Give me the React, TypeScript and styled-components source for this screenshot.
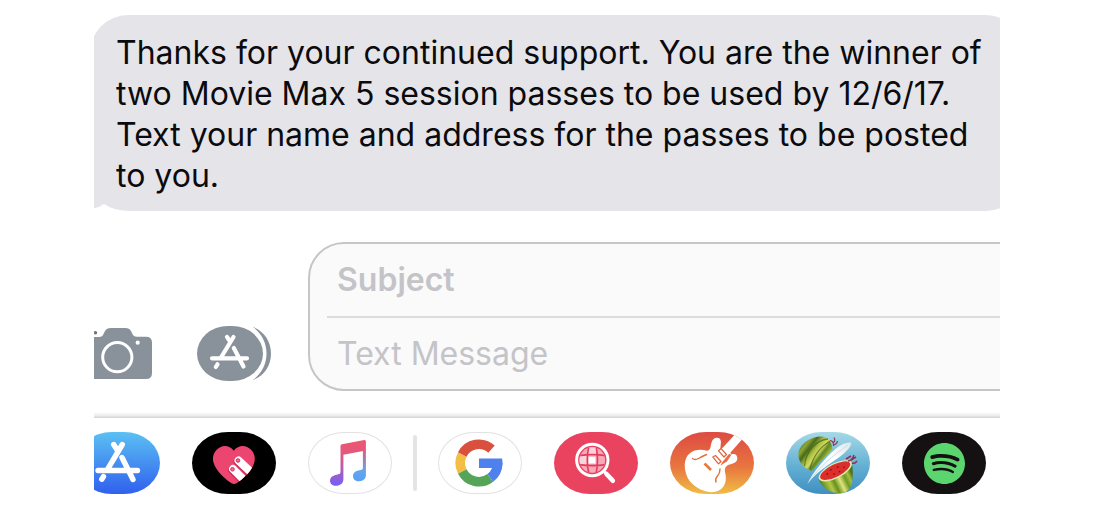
import React from "react";
import styled, { createGlobalStyle } from "styled-components";
import { SiSpotify } from "react-icons/si";

const GlobalStyle = createGlobalStyle`
  * { box-sizing: border-box; }
  body {
    margin: 0;
    background: #fff;
    font-family: Inter, "Liberation Sans", sans-serif;
  }
`;

const Screen = styled.main`
  margin: 0 94px;
  padding: 15px 0 20px;
  overflow: hidden;
`;

const Bubble = styled.article`
  position: relative;
  margin: 0 -22px 0 -4px;
  padding: 17px 0 15px 26px;
  background: #e5e4e9;
  border-radius: 38px 36px 36px 0;
`;

const BubbleText = styled.p`
  margin: 0;
  color: #0b0b0d;
  font-size: 32px;
  line-height: 41px;
  white-space: nowrap;
`;

const Tail = styled.svg`
  position: absolute;
  left: 0;
  bottom: 0;
`;

const Compose = styled.form`
  display: flex;
  align-items: flex-end;
  margin-top: 31px;
`;

const Tools = styled.div`
  display: flex;
  align-items: center;
  gap: 45px;
  padding: 0 37px 10px 0;
`;

const IconButton = styled.button`
  display: block;
  padding: 0;
  border: 0;
  background: none;
  cursor: pointer;

  svg { display: block; }
`;

const Fields = styled.div`
  flex: 1;
  min-width: 0;
  margin-right: -40px;
  padding-left: 17px;
  border: 2px solid #c6c6c9;
  border-radius: 36px;
  background: #fafafa;
  overflow: hidden;
`;

const Field = styled.input<{ $strong?: boolean }>`
  display: block;
  width: 100%;
  height: ${(p) => (p.$strong ? "72px" : "73px")};
  padding: ${(p) => (p.$strong ? "0 10px 2px" : "0 10px")};
  border: 0;
  border-top: ${(p) => (p.$strong ? "0" : "2px solid #dcdcde")};
  outline: 0;
  background: transparent;
  color: #0b0b0d;
  font-family: inherit;
  font-size: 32px;
  font-weight: ${(p) => (p.$strong ? 600 : 400)};

  &::placeholder { color: #c4c4c8; opacity: 1; }
`;

const Edge = styled.div`
  height: 6px;
  margin-top: 21px;
  background: linear-gradient(#ffffff, #ececec 60%, #d2d2d2);
`;

const Drawer = styled.nav`
  display: flex;
  align-items: center;
  gap: 32px;
  margin-left: -18px;
  padding-top: 14px;
`;

const AppButton = styled.button<{ $bg: string; $outlined?: boolean }>`
  display: flex;
  flex: none;
  align-items: center;
  justify-content: center;
  width: 84px;
  height: 62px;
  padding: 0;
  border: 0;
  border-radius: 36px / 31px;
  background: ${(p) => p.$bg};
  box-shadow: ${(p) => (p.$outlined ? "inset 0 0 0 1px #e2e2e4" : "none")};
  overflow: hidden;
  cursor: pointer;
`;

const Separator = styled.span`
  flex: none;
  width: 4px;
  height: 56px;
  margin: 0 -11px;
  border-radius: 2px;
  background: #e3e3e8;
`;

const Art = ({ children }: { children: React.ReactNode }) => (
  <svg width="84" height="62" viewBox="0 0 84 62" aria-hidden="true">
    {children}
  </svg>
);

const CameraIcon = () => (
  <svg width="58" height="51" viewBox="0 0 58 51" aria-hidden="true">
    <path
      fill="#89929b"
      d="M0 9H5Q8.5 9 9.500 6L11 3Q12.500 0 17 0H31.500Q35.500 0 37 3L39 7Q40 8.700 42.500 8.700H52Q58 8.700 58 14.500V45Q58 51 52 51H0Z"
    />
    <circle cx="23.300" cy="29.200" r="14.600" fill="none" stroke="#fff" strokeWidth="3" />
    <circle cx="43.700" cy="14.700" r="2.100" fill="#fff" />
    <circle cx="1.500" cy="4.700" r="1.700" fill="#6d757d" />
  </svg>
);

const AppsIcon = () => (
  <svg width="74" height="55" viewBox="0 0 74 55" aria-hidden="true">
    <rect width="66" height="55" rx="31" ry="27.500" fill="#89929b" />
    <path fill="#89929b" d="M56 1C67 5 74 15 74 27.500S67 50 56 54C65 47 69.500 38 69.500 27.500S65 8 56 1Z" />
    <g stroke="#fff" strokeWidth="4.200" strokeLinecap="round" fill="none">
      <path d="M36.500 11L24 31.500M30 11L32.500 14.500M36.800 22L46.500 40.500M15 32.300H50M20.500 38.300L18.800 41" />
    </g>
  </svg>
);

const StoreArt = () => (
  <Art>
    <g stroke="#fff" strokeWidth="5.400" strokeLinecap="round" fill="none">
      <path d="M46.300 12.500L31.500 37.300M37.700 12.500L41.500 18.500M46 25.500L57 47.500M22 38.500H61.500M27.500 44.500L25.800 47.200" />
    </g>
  </Art>
);

const heart =
  "M41.800 18.800C45.500 14 51 13 55.500 15.300C61.500 18.300 64 24.500 62.300 30.500C60 39 51 47 44.500 51.200Q42 52.700 39.500 51.200C33 47 24 39 21.500 30.500C19.800 24.500 22.300 18.300 28.200 15.300C32.700 13 38 14 41.800 18.800Z";

const HeartArt = () => (
  <Art>
    <clipPath id="heart-shape">
      <path d={heart} />
    </clipPath>
    <path d={heart} fill="#ec4570" />
    <g clipPath="url(#heart-shape)" strokeLinecap="round" strokeWidth="8">
      <path d="M45.500 29.500L62 45M40 38L56 54" stroke="#c92f57" />
      <path d="M46.500 28.500L63 44M41 37L57 53" stroke="#fff" />
    </g>
    <g fill="#ee6c8d" stroke="#c93660">
      <circle cx="46" cy="28.500" r="1.800" />
      <circle cx="40.500" cy="37.300" r="1.800" />
    </g>
  </Art>
);

const MusicArt = () => (
  <Art>
    <defs>
      <linearGradient id="note-left" x1="0" y1="8" x2="0" y2="54" gradientUnits="userSpaceOnUse">
        <stop offset="0" stopColor="#f0566c" />
        <stop offset=".35" stopColor="#dc5a84" />
        <stop offset="1" stopColor="#7161fa" />
      </linearGradient>
      <linearGradient id="note-right" x1="0" y1="8" x2="0" y2="50" gradientUnits="userSpaceOnUse">
        <stop offset="0" stopColor="#f0566c" />
        <stop offset=".35" stopColor="#c26a9c" />
        <stop offset=".75" stopColor="#5ea6f0" />
        <stop offset="1" stopColor="#5b9df5" />
      </linearGradient>
    </defs>
    <path
      fill="url(#note-right)"
      d="M54.900 18H57.900V43C57.900 47 55 49.200 51 49.200C47.500 49.200 45 47.200 45 44.200C45 40 48.500 38.700 51.500 38.200C54 37.800 54.900 37.500 54.900 35.500Z"
    />
    <path
      fill="url(#note-left)"
      d="M32.500 14Q32.500 12.500 34 12.200L56.300 8Q57.900 7.800 57.900 9.500V18.600L35.400 22.800V47C35.400 51.500 32 53.800 28 53.800C24.500 53.800 22 51.800 22 48.700C22 44.800 25.500 43.300 28.500 42.700C31.500 42.200 32.500 42 32.500 39.500Z"
    />
  </Art>
);

const GoogleArt = () => (
  <Art>
    <g fill="none" strokeWidth="9.600">
      <path stroke="#f3be43" d="M24.300 22.500A18.700 18.700 0 0 0 24.300 39.500" />
      <path stroke="#d9503f" d="M53.500 17.100A18.700 18.700 0 0 0 24.300 22.500" />
      <path stroke="#55a458" d="M24.300 39.500A18.700 18.700 0 0 0 52.300 45.900" />
      <path stroke="#4f81ee" d="M52.300 45.900A18.700 18.700 0 0 0 59.700 31" />
    </g>
    <path fill="#4f81ee" d="M41 26.500H64.100Q64.500 29 64.500 31.500L63.800 36H41Z" />
  </Art>
);

const SearchArt = () => (
  <Art>
    <clipPath id="globe">
      <circle cx="38.300" cy="28" r="12.800" />
    </clipPath>
    <g clipPath="url(#globe)">
      <rect x="25" y="15" width="27" height="27" fill="#f7a9b9" />
      <path d="M34 15H42V24H34ZM34 24.500H42V32H34ZM25 24H33V32H25Z" fill="#fbd3dc" />
      <rect x="35" y="25" width="6" height="6" fill="#fff" />
      <g stroke="#e53a5a" strokeWidth="1.600" fill="none">
        <path d="M25 23.600Q38 21.600 52 23.600M25 32.600Q38 34.600 52 32.600M35 14Q31.500 28 35 42M42 14Q45 28 42 42" />
      </g>
    </g>
    <circle cx="38.300" cy="28" r="15.700" fill="none" stroke="#fff" strokeWidth="3" />
    <path d="M50 39.500L52 41.500" stroke="#fff" strokeWidth="3" />
    <path d="M52.500 42L58.800 48.700" stroke="#fff" strokeWidth="4.600" strokeLinecap="round" />
  </Art>
);

const GuitarArt = () => (
  <Art>
    <path
      fill="#fff"
      d="M37 18.700C40 18.500 40.300 16 41 13C41.800 9 43 6.500 46.500 5.800C50.500 5.300 51.500 9 50.700 12.500L50.300 17L53 15.500L65.300 2L72 7.500L60.500 20.500L61 22.500C65 21 67.500 23 67.300 26.500C67 31 63 31.500 59.500 32.500C55.500 34 54.500 36 55 40C56.200 45 56.500 50 53.500 54.500C50 59.500 44 61 37.500 59.700C28 57.500 19.500 52 16.300 42.500C13.500 34 14.500 26 19.500 21.500C24.500 17.300 31 17.300 37 18.700Z"
    />
    <path fill="#e86d41" d="M59 22L61.500 22.500L57 29.500L53.500 31.500L50.500 34L52 30.500Z" />
    <g fill="none" stroke="#e2663f" strokeWidth="1.200" strokeLinejoin="round">
      <path d="M42.800 25L45.500 23.500L51 29.500L48.500 31.800Z" />
      <path d="M48.500 18.800L51 16.500L56.500 22.500L54 25Z" />
    </g>
    <g fill="none" stroke="#e2703f" strokeWidth="1.400" strokeLinecap="round">
      <path d="M22.500 26.500Q25 28.500 28.500 26.500T36.500 22.500" />
      <path d="M46 50Q45 46.500 47.500 44T50 37" />
    </g>
    <path d="M34.500 31.500L41 38" stroke="#e67b3e" strokeWidth="2.600" />
  </Art>
);

const FruitArt = () => (
  <Art>
    <defs>
      <linearGradient id="rind" x1="14" y1="12" x2="40" y2="32" gradientUnits="userSpaceOnUse">
        <stop offset="0" stopColor="#55781d" />
        <stop offset=".16" stopColor="#8ea636" />
        <stop offset=".3" stopColor="#48691a" />
        <stop offset=".46" stopColor="#a9bd3f" />
        <stop offset=".6" stopColor="#d3dc62" />
        <stop offset=".72" stopColor="#5f8420" />
        <stop offset=".88" stopColor="#a2ba3c" />
        <stop offset="1" stopColor="#527719" />
      </linearGradient>
      <linearGradient id="half" x1="38" y1="58" x2="67" y2="44" gradientUnits="userSpaceOnUse">
        <stop offset="0" stopColor="#5d8620" />
        <stop offset=".25" stopColor="#b3c945" />
        <stop offset=".4" stopColor="#67901f" />
        <stop offset=".58" stopColor="#dfe57a" />
        <stop offset=".75" stopColor="#6f9825" />
        <stop offset=".88" stopColor="#a4bf3d" />
        <stop offset="1" stopColor="#4d7417" />
      </linearGradient>
      <linearGradient id="blade" x1="22" y1="50" x2="65" y2="12" gradientUnits="userSpaceOnUse">
        <stop offset="0" stopColor="#dff1f8" />
        <stop offset=".6" stopColor="#ffffff" />
        <stop offset="1" stopColor="#dbe7ed" />
      </linearGradient>
    </defs>
    <path fill="url(#rind)" d="M26 39C17 36 11 28 12.500 20C15 11 25 4.500 35 4.500C39 4.500 42 6 43.500 8.500Q46.500 13 46.500 17.500Q36 27 26 39Z" />
    <path fill="none" stroke="#3f6114" strokeWidth="1.300" opacity=".7" d="M42 7C31 8 20 18 18.500 34M44 9.500C36 13 27 24 24 37" />
    <path fill="none" stroke="#8d3a56" strokeWidth="1.200" d="M44 8.500Q48 9 47.500 14M47 11Q50 9 48 5.500M48 13Q51 12 51.500 9" />
    <path fill="url(#blade)" d="M21.300 52C27 40 38 27 50 16.500C56 11.500 62 9.500 65.500 11C64.500 16 58 22 50 27.500C39 35 29 42 21.300 52Z" />
    <path fill="none" stroke="#cfdde4" d="M24 48C34 35 46 24 62 13" />
    <path fill="url(#half)" d="M32.500 47C34.500 53 39 57.500 46 60C52 62 60 61.500 63.500 57C67 51 67.500 40 66 31Z" />
    <g transform="rotate(-27 49.300 38.800)">
      <ellipse cx="49.300" cy="38.800" rx="18.300" ry="7.500" fill="#e4ecb4" />
      <ellipse cx="49.300" cy="38.600" rx="16.600" ry="6.200" fill="#dc2f2d" />
      <path
        d="M40 38H41.500M46 41H47.500M52.500 36.500H54M58 39.500H59.500M45 36H46.500M52 41.500H53.500"
        stroke="#6b1012"
        strokeWidth="1.300"
      />
    </g>
    <path fill="none" stroke="#8e3152" strokeWidth="1.500" d="M62 29Q66 29 68 23M65 28L70 25M66 31Q69 32 71 29M60 27L65 24" />
  </Art>
);

const message = [
  "Thanks for your continued support. You are the winner of",
  "two Movie Max 5 session passes to be used by 12/6/17.",
  "Text your name and address for the passes to be posted",
  "to you.",
];

export default function App() {
  return (
    <>
      <GlobalStyle />
      <Screen>
        <Bubble>
          <BubbleText>
            {message.map((line, i) => (
              <React.Fragment key={line}>
                {i > 0 && <br />}
                {line}
              </React.Fragment>
            ))}
          </BubbleText>
          <Tail width="40" height="8" viewBox="0 0 40 8" aria-hidden="true">
            <path fill="#fff" d="M0 6Q9 5 14 1Q24 8 40 8H0Z" />
          </Tail>
        </Bubble>

        <Compose onSubmit={(e) => e.preventDefault()}>
          <Tools>
            <IconButton type="button" aria-label="Camera">
              <CameraIcon />
            </IconButton>
            <IconButton type="button" aria-label="Apps">
              <AppsIcon />
            </IconButton>
          </Tools>
          <Fields>
            <Field $strong type="text" aria-label="Subject" placeholder="Subject" />
            <Field type="text" aria-label="Text Message" placeholder="Text Message" />
          </Fields>
        </Compose>

        <Edge />
        <Drawer aria-label="Message apps">
          <AppButton type="button" aria-label="App Store" $bg="linear-gradient(#5bc0f3, #3060ee)">
            <StoreArt />
          </AppButton>
          <AppButton type="button" aria-label="Digital Touch" $bg="#000">
            <HeartArt />
          </AppButton>
          <AppButton type="button" aria-label="Music" $bg="#fff" $outlined>
            <MusicArt />
          </AppButton>
          <Separator />
          <AppButton type="button" aria-label="Google" $bg="#fff" $outlined>
            <GoogleArt />
          </AppButton>
          <AppButton type="button" aria-label="Image search" $bg="#e94360">
            <SearchArt />
          </AppButton>
          <AppButton type="button" aria-label="GarageBand" $bg="linear-gradient(#dd4b42, #e8743f 55%, #efbd45)">
            <GuitarArt />
          </AppButton>
          <AppButton type="button" aria-label="Fruit Ninja" $bg="linear-gradient(#a5d9e8, #64b0d3 55%, #3f8fc0)">
            <FruitArt />
          </AppButton>
          <AppButton type="button" aria-label="Spotify" $bg="#151112">
            <SiSpotify size={41} color="#5bd66f" />
          </AppButton>
        </Drawer>
      </Screen>
    </>
  );
}
